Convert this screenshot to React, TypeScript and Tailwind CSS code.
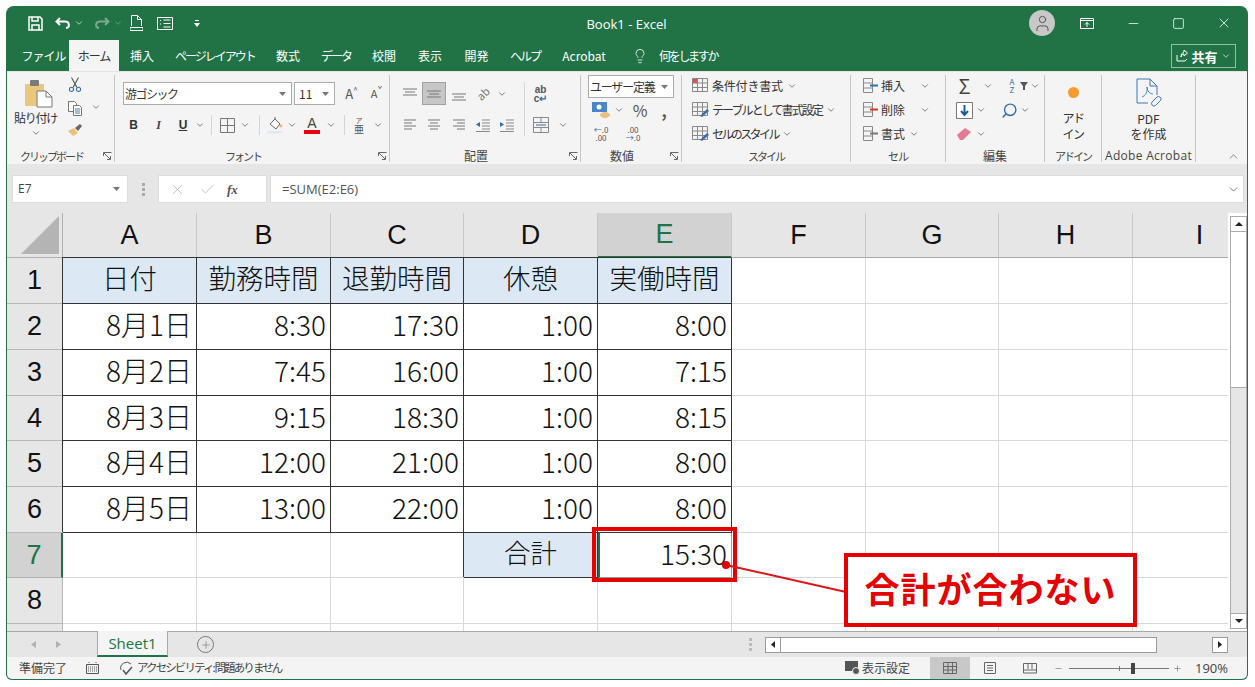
import type { ReactNode } from "react";
import { ChevronDown, ChevronUp, Lightbulb, Minus, Plus, Square, X, User, Search, Check } from "lucide-react";
import clsx from "clsx";

const FONT = "font-['Noto_Sans_CJK_JP','Noto_Sans',sans-serif]";
const CELL_FONT = "font-['Noto_Sans_CJK_JP',sans-serif] font-light";

const Chev = ({ className }: { className?: string }) => (
  <ChevronDown size={10} strokeWidth={1.6} className={clsx("text-[#444] shrink-0", className)} />
);

// fixed width slot so ribbon items line up
const Slot = ({ w, children, className }: { w: string; children?: ReactNode; className?: string }) => (
  <div className={clsx("flex items-center justify-center shrink-0 h-[22px]", w, className)}>{children}</div>
);

const Launcher = () => (
  <svg width="9" height="9" viewBox="0 0 9 9" className="text-[#666] shrink-0">
    <path d="M.5 4V.5H8.5M1 1l6 6M4 7.5h3.5V4" fill="none" stroke="currentColor" />
  </svg>
);

const VSep = () => <div className="w-px h-[20px] bg-[#d4d4d4] shrink-0" />;

const Group = ({ w, label, labelClass, launcher, children }: { w: string; label: string; labelClass?: string; launcher?: boolean; children: ReactNode }) => (
  <div className={clsx("relative flex flex-col shrink-0 h-[87px] mt-[3px] border-r border-[#c6c6c6]", w)}>
    <div className="flex-1 min-h-0">{children}</div>
    <div className={clsx("h-[10px] mb-px flex items-center justify-center leading-none text-[#444] whitespace-nowrap", launcher && "pr-[18px]", labelClass ?? "text-[11px] tracking-[-2px]")}>
      {label}
    </div>
    {launcher && (
      <div className="absolute right-[2px] bottom-px">
        <Launcher />
      </div>
    )}
  </div>
);

const Lines = ({ kind }: { kind: "top" | "mid" | "bot" | "left" | "center" | "right" }) => {
  const paths = {
    top: "M1 3h14M3 6h10M1 9h14",
    mid: "M1 5h14M3 8h10M1 11h14",
    bot: "M1 8h14M3 11h10M1 14h14",
    left: "M2 3h12M2 6h8M2 9h12M2 12h8",
    center: "M2 3h12M4 6h8M2 9h12M4 12h8",
    right: "M2 3h12M6 6h8M2 9h12M6 12h8",
  };
  return (
    <svg width="16" height="16" viewBox="0 0 16 16">
      <path d={paths[kind]} stroke="#777" fill="none" />
    </svg>
  );
};

const Clipboard = () => (
  <svg width="29" height="28" viewBox="0 0 29 28">
    <rect x="1" y="4" width="19" height="22" fill="#eac77f" />
    <rect x="6" y="0" width="9" height="6" rx="1" fill="#7a7a7a" />
    <path d="M13 11h9l6 6v10H13z" fill="#fff" stroke="#777" />
    <path d="M22 11v6h6" fill="none" stroke="#777" />
  </svg>
);

const Scissors = () => (
  <svg width="14" height="17" viewBox="0 0 16 18" fill="none" stroke="#555" strokeWidth="1.2">
    <path d="M4 1l6 11M12 1L6 12" />
    <circle cx="4" cy="14.5" r="2.4" stroke="#3a6ea5" />
    <circle cx="12" cy="14.5" r="2.4" stroke="#3a6ea5" />
  </svg>
);

const Copy = () => (
  <svg width="16" height="16" viewBox="0 0 16 16" fill="#fff" stroke="#777">
    <path d="M1.5 1.5h6l2 2v8h-8z" />
    <path d="M6.5 5.5h6l2 2v8h-8z" />
    <path d="M8 9h5M8 11h5M8 13h5" stroke="#4a7fb5" />
  </svg>
);

const Brush = () => (
  <svg width="16" height="14" viewBox="0 0 16 14">
    <path d="M1 8l6-3 4 5-5 3z" fill="#e9c27a" />
    <path d="M8 5l5-4 2 2-4 5z" fill="#666" />
  </svg>
);

const FontBox = ({ w, text, className, textClass }: { w: string; text: string; className?: string; textClass?: string }) => (
  <div className={clsx("h-[23px] bg-white border border-[#ababab] flex items-center justify-between pl-[1px] pr-[5px] shrink-0 text-[#333]", w, className)}>
    <span className={clsx("text-[12px] leading-none whitespace-nowrap", textClass)}>{text}</span>
    <svg width="7" height="4" viewBox="0 0 7 4" className="shrink-0"><path d="M0 0h7L3.5 4z" fill="#777" /></svg>
  </div>
);

const Ribbon = () => (
  <div className="h-[93px] bg-[#f4f4f4] flex shrink-0 text-[#333] text-[12px] border-t border-[#e4e4e4]">
    {/* clipboard */}
    <Group w="w-[108px]" label="クリップボード" launcher>
      <div className="flex h-full">
        <div className="w-[57px] flex flex-col items-center pt-[5px]">
          <div className="pl-[5px]"><Clipboard /></div>
          <div className="text-[12px] leading-none mt-[4px] tracking-[-1.200px] whitespace-nowrap">貼り付け</div>
          <Chev className="mt-[4px]" />
        </div>
        <div className="w-[22px] flex flex-col items-center pt-[1px] gap-[7px]">
          <Scissors />
          <Copy />
          <Brush />
        </div>
        <div className="pt-[27px] pl-[5px]"><Chev /></div>
      </div>
    </Group>

    {/* font */}
    <Group w="w-[275px]" label="フォント" launcher>
      <div className="pl-[8px] pt-[7px] flex gap-[2px] items-center">
        <FontBox w="w-[169px]" text="游ゴシック" textClass="tracking-[-1.500px]" />
        <FontBox w="w-[41px]" text="11" className="pl-[4px]" />
        <Slot w="w-[23px]" className="ml-[3px] text-[13px] text-[#555]">A<sup className="text-[8px]">^</sup></Slot>
        <Slot w="w-[23px]" className="text-[11px] text-[#555]">A<sup className="text-[8px]">ˇ</sup></Slot>
      </div>
      <div className="pl-[8px] mt-[9px] flex items-center">
        <Slot w="w-[21px]" className="font-bold text-[12px] font-['Liberation_Sans',sans-serif]">B</Slot>
        <Slot w="w-[25px]" className="italic font-bold text-[12px] text-[#444] font-['Liberation_Serif',serif] ml-[2px]">I</Slot>
        <Slot w="w-[24px]" className="underline font-bold text-[12px] font-['Liberation_Sans',sans-serif]">U</Slot>
        <Slot w="w-[10px]"><Chev /></Slot>
        <Slot w="w-[13px]"><VSep /></Slot>
        <Slot w="w-[18px]">
          <svg width="15" height="15" viewBox="0 0 15 15" fill="none" stroke="#777"><path d="M.5.5h14v14H.5zM7.5 0v15M0 7.5h15" /></svg>
        </Slot>
        <Slot w="w-[17px]"><Chev /></Slot>
        <Slot w="w-[13px]"><VSep /></Slot>
        <Slot w="w-[17px]">
          <svg width="16" height="18" viewBox="0 0 16 18">
            <path d="M3 8l5-5 5 5-4 5z" fill="#fff" stroke="#666" />
            <path d="M8 3V1" stroke="#666" />
            <circle cx="14" cy="10" r="1.4" fill="#f4b36b" />
            <rect x="0" y="15" width="15" height="2.5" fill="#dde9f5" />
          </svg>
        </Slot>
        <Slot w="w-[18px]"><Chev /></Slot>
        <Slot w="w-[22px]">
          <div className="flex flex-col items-center leading-none">
            <span className="text-[14px] font-['Liberation_Sans',sans-serif] text-[#444] leading-[13px]">A</span>
            <span className="w-[16px] h-[4px] bg-[#e60012]" />
          </div>
        </Slot>
        <Slot w="w-[15px]"><Chev /></Slot>
        <Slot w="w-[13px]"><VSep /></Slot>
        <Slot w="w-[16px]" className="text-[10px] text-[#555] leading-[9px]">
          <span className="flex flex-col items-center"><span className="text-[7px] leading-[7px]">ア</span><span className="leading-[10px]">亜</span></span>
        </Slot>
        <Slot w="w-[21px]"><Chev /></Slot>
      </div>
    </Group>

    {/* alignment */}
    <Group w="w-[191px]" label="配置" labelClass="text-[12px]" launcher>
      <div className="pl-[7px] pt-[7px] flex items-start">
        <div className="flex flex-col gap-[9px]">
          <div className="flex items-center">
            <Slot w="w-[25px]" className="h-[23px]"><Lines kind="top" /></Slot>
            <Slot w="w-[24px]" className="h-[23px] bg-[#c6c6c6] border border-[#a0a0a0]"><Lines kind="mid" /></Slot>
            <Slot w="w-[25px]" className="h-[23px]"><Lines kind="bot" /></Slot>
            <Slot w="w-[24px]" className="h-[23px] text-[11px] text-[#777] -rotate-45">ab</Slot>
            <Slot w="w-[14px]" className="h-[23px]"><Chev /></Slot>
          </div>
          <div className="flex items-center">
            <Slot w="w-[25px]"><Lines kind="left" /></Slot>
            <Slot w="w-[24px]"><Lines kind="center" /></Slot>
            <Slot w="w-[25px]"><Lines kind="right" /></Slot>
            <Slot w="w-[24px]">
              <svg width="16" height="14" viewBox="0 0 16 14" fill="none"><path d="M7 2h8M7 5h8M7 8h8M7 11h8M1 13.500h14" stroke="#888" /><path d="M5 4L1 6.500 5 9z" fill="#2d6fb0" /></svg>
            </Slot>
            <Slot w="w-[24px]">
              <svg width="16" height="14" viewBox="0 0 16 14" fill="none"><path d="M7 2h8M7 5h8M7 8h8M7 11h8M1 13.500h14" stroke="#888" /><path d="M1 4l4 2.500L1 9z" fill="#2d6fb0" /></svg>
            </Slot>
          </div>
        </div>
        <div className="w-px h-[54px] bg-[#d4d4d4] shrink-0 ml-[5px]" />
        <div className="flex flex-col gap-[9px]">
          <Slot w="w-[31px]" className="h-[23px]">
            <div className="flex flex-col items-center text-[10px] leading-[9px] text-[#555] font-['Liberation_Sans',sans-serif] font-bold">
              <span>ab</span><span>c<span className="text-[#3a6ea5]">↵</span></span>
            </div>
          </Slot>
          <div className="flex items-center">
            <Slot w="w-[31px]">
              <svg width="16" height="16" viewBox="0 0 16 16" fill="none"><path d="M.5.5h15v15H.5zM0 5.500h16M0 10.500h16M8 0v5M8 11v5" stroke="#888" /><path d="M3 8h10" stroke="#2d6fb0" /></svg>
            </Slot>
            <Slot w="w-[14px]"><Chev /></Slot>
          </div>
        </div>
      </div>
    </Group>

    {/* number */}
    <Group w="w-[101px]" label="数値" labelClass="text-[12px]" launcher>
      <div className="pl-[7px]">
        <FontBox w="w-[86px]" text="ユーザー定義" textClass="tracking-[-1.200px]" />
      </div>
      <div className="pl-[9px] flex items-center">
        <Slot w="w-[22px]" className="h-[24px]">
          <svg width="20" height="18" viewBox="0 0 20 18">
            <rect x="1" y="1" width="15" height="10" fill="#4a86c5" />
            <circle cx="8" cy="6" r="2.500" fill="#fff" />
            <ellipse cx="14" cy="14" rx="5" ry="3" fill="#e9c27a" />
          </svg>
        </Slot>
        <Slot w="w-[14px]" className="h-[24px]"><Chev /></Slot>
        <Slot w="w-[28px]" className="h-[24px] text-[16px] text-[#555]">%</Slot>
        <Slot w="w-[20px]" className="h-[24px] text-[16px] font-bold text-[#555]">,</Slot>
      </div>
      <div className="pl-[9px] flex items-center">
        <Slot w="w-[22px]" className="h-[24px] text-[8px] leading-[8px] text-[#555]"><span className="text-center"><span className="text-[#2d6fb0]">←</span>.0<br />.00</span></Slot>
        <Slot w="w-[10px]" className="h-[24px]" />
        <Slot w="w-[22px]" className="h-[24px] text-[8px] leading-[8px] text-[#555]"><span className="text-center">.00<br /><span className="text-[#2d6fb0]">→</span>.0</span></Slot>
      </div>
    </Group>

    {/* styles */}
    <Group w="w-[169px]" label="スタイル">
      <div className="pl-[10px] flex flex-col gap-[2px]">
        {[
          { t: "条件付き書式", c: "tracking-[-0.200px]" },
          { t: "テーブルとして書式設定", c: "tracking-[-1.900px]" },
          { t: "セルのスタイル", c: "tracking-[-2.600px]" },
        ].map((r, i) => (
          <div key={r.t} className="h-[22px] flex items-center">
            <svg width="18" height="16" viewBox="0 0 18 16" className="shrink-0 mr-[2px]">
              <path d="M.5.5h15v13H.5zM0 5h16M0 9.500h16M5.500 0v14M10.500 0v14" fill="none" stroke="#888" />
              {i === 0 ? <rect x="1" y="1" width="4" height="4" fill="#d9534f" /> : <path d="M8 14l7-7 2 2-7 6z" fill="#3a6ea5" />}
            </svg>
            <span className={clsx("leading-none whitespace-nowrap", r.c)}>{r.t}</span>
            <Chev className="ml-[4px]" />
          </div>
        ))}
      </div>
    </Group>

    {/* cells */}
    <Group w="w-[95px]" label="セル" labelClass="text-[11px] tracking-[-1px]">
      <div className="pl-[12px] flex flex-col gap-[2px]">
        {[
          { t: "挿入", c: "#2d6fb0", gap: "ml-[15px]" },
          { t: "削除", c: "#d9342b", gap: "ml-[15px]" },
          { t: "書式", c: "#777", gap: "ml-[4px]" },
        ].map((r) => (
          <div key={r.t} className="h-[22px] flex items-center">
            <svg width="16" height="16" viewBox="0 0 16 16" className="shrink-0 mr-[2px]">
              <path d="M.5.5h9v14h-9zM0 5h10M0 10h10" fill="none" stroke="#888" />
              <path d="M7 7.500h8" stroke={r.c} strokeWidth="2" />
            </svg>
            <span className="leading-none">{r.t}</span>
            <Chev className={r.gap} />
          </div>
        ))}
      </div>
    </Group>

    {/* editing */}
    <Group w="w-[99px]" label="編集" labelClass="text-[12px]">
      <div className="pl-[10px] flex flex-col gap-[2px]">
        <div className="h-[22px] flex items-center">
          <Slot w="w-[17px]" className="text-[20px] leading-none text-[#444]">Σ</Slot>
          <Slot w="w-[16px]" className="ml-[7px]"><Chev /></Slot>
          <Slot w="w-[16px]" className="ml-[8px] text-[8px] leading-[8px] text-[#3a6ea5]"><span className="text-center">A<br />Z</span></Slot>
          <svg width="8" height="8" viewBox="0 0 8 8"><path d="M0 0h8L5 4v4H3V4z" fill="#555" /></svg>
          <Chev className="ml-[2px]" />
        </div>
        <div className="h-[22px] flex items-center">
          <svg width="17" height="17" viewBox="0 0 17 17" className="shrink-0">
            <path d="M.5.500h16v16H.5z" fill="#fff" stroke="#777" />
            <path d="M8.500 3v9M5 9l3.500 4L12 9" fill="none" stroke="#1e5c9c" strokeWidth="2" />
          </svg>
          <Chev className="ml-[3px]" />
          <Search size={17} strokeWidth={2} className="text-[#2d6fb0] ml-[15px] -scale-x-100" />
          <Chev className="ml-[2px]" />
        </div>
        <div className="h-[22px] flex items-center">
          <svg width="17" height="14" viewBox="0 0 17 14" className="shrink-0">
            <path d="M1 8l8-7 6 4-8 8H4z" fill="#e07a95" />
          </svg>
          <Chev className="ml-[3px]" />
        </div>
      </div>
    </Group>

    {/* add-ins */}
    <Group w="w-[57px]" label="アドイン">
      <div className="flex flex-col items-center h-full">
        <div className="w-[11px] h-[11px] rounded-full bg-[#f79b2e] mt-[12px]" />
        <div className="text-center text-[12px] leading-[16px] mt-[12px] tracking-[-1.500px]">アド<br />イン</div>
      </div>
    </Group>

    {/* acrobat */}
    <Group w="w-[94px]" label="Adobe Acrobat" labelClass="text-[12px] tracking-[0.300px] font-['Open_Sans',sans-serif]">
      <div className="flex flex-col items-center h-full">
        <svg width="28" height="32" viewBox="0 0 28 32" fill="none" stroke="#3a76b8" strokeWidth="1" className="mt-[2px]">
          <path d="M2 2h13l7 7v9M2 2v24h11" />
          <path d="M15 2v7h7" />
          <path d="M7 20c3-1 6-5 5-10 0 4 3 7 6 7" strokeWidth="0.9" />
          <path d="M17 25l5-5a2.500 2.500 0 0 1 3.500 3.500l-5 5a2.500 2.500 0 0 1-3.500-3.500z" />
        </svg>
        <div className="text-center text-[12px] leading-[15px] mt-[2px]">PDF<br />を作成</div>
      </div>
    </Group>

    <div className="flex-1 flex items-end justify-end pr-[7px] pb-[1px]">
      <ChevronUp size={13} strokeWidth={1.3} className="text-[#555]" />
    </div>
  </div>
);

const TitleBar = () => (
  <div className="h-[34px] relative flex items-center shrink-0 text-white">
    <div className="flex items-center pl-[20px]">
      <Slot w="w-[16px]">
        <svg width="15" height="15" viewBox="0 0 15 15" fill="none" stroke="#fff" strokeWidth="1.500"><path d="M1 1h11l2 2v11H1zM4 1v4h6V1M4 14V9h7v5" /></svg>
      </Slot>
      <Slot w="w-[20px]" className="ml-[10px]">
        <svg width="16" height="12" viewBox="0 0 16 12" fill="none" stroke="#fff" strokeWidth="2"><path d="M5 1L1.500 4.500 5 8M2 4.500h8c5 0 5 6 1 6.500" /></svg>
      </Slot>
      <Chev className="text-white ml-[1px]" />
      <Slot w="w-[20px]" className="ml-[8px] opacity-40">
        <svg width="16" height="12" viewBox="0 0 16 12" fill="none" stroke="#fff" strokeWidth="2"><path d="M11 1l3.500 3.500L11 8M14 4.500H6c-5 0-5 6-1 6.500" /></svg>
      </Slot>
      <Chev className="text-white opacity-40 ml-[1px]" />
      <Slot w="w-[14px]" className="ml-[6px]">
        <svg width="13" height="16" viewBox="0 0 13 16" fill="none" stroke="#fff"><path d="M1.500 11V.5h6l4 4V11M7.500.5v4h4M0 12.500h13v3H0z" /></svg>
      </Slot>
      <Slot w="w-[16px]" className="ml-[14px]">
        <svg width="16" height="13" viewBox="0 0 16 13" fill="none" stroke="#fff"><path d="M.5.500h15v12H.5zM6.500 3h7M6.500 6.500h7M6.500 10h7M3 3.500h1M3 7h1" /></svg>
      </Slot>
      <Slot w="w-[8px]" className="ml-[20px]">
        <svg width="6" height="7" viewBox="0 0 6 7" fill="#fff"><path d="M0 3h6L3 7zM1 0h4v1H1z" /></svg>
      </Slot>
    </div>
    <div className="absolute left-0 right-0 top-[12px] text-center text-[13px] leading-none font-['Open_Sans',sans-serif] pr-[1px]">Book1 - Excel</div>
    <div className="ml-auto flex items-center pr-[15px]">
      <div className="w-[26px] h-[26px] rounded-full bg-[#c8c8c8] flex items-center justify-center mr-[24px]">
        <User size={19} strokeWidth={1.1} className="text-[#444]" />
      </div>
      <Slot w="w-[16px]" className="mr-[30px]">
        <svg width="14" height="11" viewBox="0 0 14 11" fill="none" stroke="#fff"><path d="M.5.500h13v10H.5zM0 2.500h14M7 9V4.500M5 6.500l2-2 2 2" /></svg>
      </Slot>
      <Slot w="w-[16px]" className="mr-[29px]"><Minus size={15} strokeWidth={1.2} /></Slot>
      <Slot w="w-[16px]" className="mr-[30px]"><Square size={13} strokeWidth={1.4} /></Slot>
      <Slot w="w-[16px]"><X size={18} strokeWidth={1.2} /></Slot>
    </div>
  </div>
);

const tabs: [string, string][] = [
  ["ファイル", "ml-[14px] w-[45px] tracking-[-1px]"],
  ["ホーム", "ml-[3px] w-[50px] bg-[#f4f4f4] text-[#333] -mt-px h-[31px] tracking-[-1px]"],
  ["挿入", "w-[46px]"],
  ["ページレイアウト", "w-[100px] tracking-[-2px]"],
  ["数式", "w-[46px]"],
  ["データ", "w-[50px] tracking-[-2px]"],
  ["校閲", "w-[46px]"],
  ["表示", "w-[46px]"],
  ["開発", "w-[47px]"],
  ["ヘルプ", "w-[50px] tracking-[-2px]"],
  ["Acrobat", "w-[68px]"],
];

const TabBar = () => (
  <div className="h-[31px] flex items-end shrink-0 text-white text-[12px]">
    {tabs.map(([t, c]) => (
      <div key={t} className={clsx("h-[30px] flex items-center justify-center leading-none whitespace-nowrap", c)}>
        {t}
      </div>
    ))}
    <div className="h-[30px] flex items-center ml-[14px]">
      <Lightbulb size={16} strokeWidth={1.2} className="mr-[11px]" />
      <span className="leading-none tracking-[-2.300px]">何をしますか</span>
    </div>
    <div className="ml-auto mr-[11px] mb-[3px] h-[24px] w-[65px] border border-[#8fbfa3] flex items-center justify-center gap-[3px]">
      <svg width="12" height="12" viewBox="0 0 12 12" fill="none" stroke="#fff"><path d="M1 5v6h8l2-2M5 7c0-3 2-5 3-5V0l3.500 3L8 6V4C7 4 5 5 5 7z" /></svg>
      <span className="font-bold text-[13px] leading-none">共有</span>
      <Chev className="text-white" />
    </div>
  </div>
);

const FormulaBar = () => (
  <div className="h-[49px] bg-[#e6e6e6] flex items-start pl-[5px] pt-[11px] shrink-0 text-[#444]">
    <div className="w-[116px] h-[28px] bg-white border border-[#dcdcdc] flex items-center justify-between pl-[5px] pr-[7px]">
      <span className="text-[12px] leading-none font-['Open_Sans',sans-serif]">E7</span>
      <svg width="7" height="4" viewBox="0 0 7 4"><path d="M0 0h7L3.500 4z" fill="#777" /></svg>
    </div>
    <div className="w-[30px] h-[28px] flex items-center justify-center">
      <svg width="3" height="13" viewBox="0 0 3 13" fill="#aaa"><rect y="0" width="3" height="3" /><rect y="5" width="3" height="3" /><rect y="10" width="3" height="3" /></svg>
    </div>
    <div className="w-[109px] h-[28px] bg-white border border-[#dcdcdc] flex items-center">
      <X size={17} strokeWidth={1} className="ml-[10px] text-[#aaa]" />
      <Check size={17} strokeWidth={1} className="ml-[13px] text-[#aaa]" />
      <span className="ml-[11px] italic font-bold text-[13px] font-['Liberation_Serif',serif] text-[#555] leading-none">fx</span>
    </div>
    <div className="ml-[3px] w-[974px] h-[28px] bg-white border border-[#dcdcdc] flex items-center justify-between pl-[11px] pr-[3px]">
      <span className="text-[13px] leading-none font-['Open_Sans',sans-serif] text-[#555]">=SUM(E2:E6)</span>
      <ChevronDown size={13} strokeWidth={1.4} className="text-[#555]" />
    </div>
  </div>
);

const COLS = ["A", "B", "C", "D", "E", "F", "G", "H", "I"];

const rows: string[][] = [
  ["日付", "勤務時間", "退勤時間", "休憩", "実働時間"],
  ["8月1日", "8:30", "17:30", "1:00", "8:00"],
  ["8月2日", "7:45", "16:00", "1:00", "7:15"],
  ["8月3日", "9:15", "18:30", "1:00", "8:15"],
  ["8月4日", "12:00", "21:00", "1:00", "8:00"],
  ["8月5日", "13:00", "22:00", "1:00", "8:00"],
  ["", "", "", "合計", "15:30"],
  ["", "", "", "", ""],
  ["", "", "", "", ""],
];

const Sheet = () => (
  <div className="flex-1 min-h-0 flex text-[#111]">
    <div className={clsx("w-[1221px] shrink-0 overflow-hidden grid grid-cols-[56px_134px_134px_133px_134px_134px_134px_133px_134px_134px] grid-rows-[45px_46px_46px_46px_45px_46px_46px_45px_46px_46px] text-[28px]", CELL_FONT)}>
      {/* corner */}
      <div className="bg-[#e6e6e6] border-r border-b border-[#b0b0b0] flex items-end justify-end p-[3px]">
        <div className="w-0 h-0 border-l-[38px] border-l-transparent border-b-[38px] border-b-[#b4b4b4]" />
      </div>
      {COLS.map((c) => (
        <div
          key={c}
          className={clsx(
            "flex items-center justify-center leading-none border-r border-[#c8c8c8] font-['Liberation_Sans',sans-serif] font-normal text-[27px]",
            c === "E" ? "bg-[#d2d2d2] text-[#217346] border-b-2 border-b-[#217346]" : "bg-[#e6e6e6] border-b border-b-[#a8a8a8]"
          )}
        >
          {c}
        </div>
      ))}
      {rows.map((r, i) => (
        <Row key={i} idx={i} cells={r} />
      ))}
    </div>
    {/* vertical scrollbar */}
    <div className="w-[17px] ml-[2px] mt-[3px] flex flex-col bg-white border-x border-[#ababab] mb-[2px]">
      <div className="h-[16px] border border-[#ababab] -mx-px flex items-center justify-center bg-white">
        <svg width="8" height="4" viewBox="0 0 8 4"><path d="M0 4h8L4 0z" fill="#222" /></svg>
      </div>
      <div className="h-[156px] border-b border-[#ababab] bg-white" />
      <div className="flex-1 bg-[#e6e6e6]" />
      <div className="h-[16px] border border-[#ababab] -mx-px flex items-center justify-center bg-white">
        <svg width="8" height="4" viewBox="0 0 8 4"><path d="M0 0h8L4 4z" fill="#222" /></svg>
      </div>
    </div>
  </div>
);

const DARK = "border-r border-b border-[#333] shadow-[-1px_-1px_0_0_#333]";

const Row = ({ idx, cells }: { idx: number; cells: string[] }) => {
  const n = idx + 1;
  return (
    <>
      <div
        className={clsx(
          "flex items-center justify-center leading-none font-['Liberation_Sans',sans-serif] font-normal text-[27px]",
          n === 7
            ? "bg-[#d2d2d2] text-[#217346] border-r-2 border-r-[#217346] border-b border-b-[#b0b0b0]"
            : "bg-[#e6e6e6] border-r border-b border-[#b8b8b8]"
        )}
      >
        {n}
      </div>
      {Array.from({ length: 9 }).map((_, c) => {
        const text = cells[c] ?? "";
        const inTable = (n <= 6 && c < 5) || (n === 7 && (c === 3 || c === 4));
        const isHead = n === 1 && c < 5;
        const isLabel = n === 7 && c === 3;
        const center = isHead || isLabel;
        return (
          <div
            key={c}
            className={clsx(
              "flex items-center leading-none whitespace-nowrap overflow-hidden pb-[5px]",
              center ? "justify-center" : "justify-end pr-[4px]",
              inTable ? DARK : "border-r border-b border-[#d8d8d8]",
              (isHead || isLabel) && "bg-[#dce9f5]",
              isHead && "text-[27.500px]",
              isLabel && "text-[26.500px]",
              n === 7 && c === 4 && "border-[#8aa596]! border-l-2! border-l-[#217346]! shadow-none!"
            )}
          >
            {text}
          </div>
        );
      })}
    </>
  );
};

const BottomTabs = () => (
  <div className="h-[26px] shrink-0 bg-[#e6e6e6] border-t border-[#a8a8a8] flex items-center text-[#666]">
    <div className="w-[90px] flex items-center pl-[24px] gap-[20px] text-[#b0b0b0]">
      <svg width="5" height="7" viewBox="0 0 5 7" fill="currentColor"><path d="M5 0v7L0 3.500z" /></svg>
      <svg width="5" height="7" viewBox="0 0 5 7" fill="currentColor"><path d="M0 0v7l5-3.500z" /></svg>
    </div>
    <div className="h-[26px] -mt-px w-[71px] bg-[#f4f4f4] border-x border-[#a8a8a8] border-b-2 border-b-[#217346] flex items-center justify-center text-[15px] leading-none text-[#217346] font-['Open_Sans',sans-serif]">
      Sheet1
    </div>
    <div className="ml-[29px] w-[17px] h-[17px] rounded-full border border-[#777] flex items-center justify-center">
      <Plus size={12} strokeWidth={1} className="text-[#555]" />
    </div>
    <svg width="3" height="13" viewBox="0 0 3 13" fill="#bbb" className="ml-[535px]"><rect y="0" width="3" height="3" /><rect y="5" width="3" height="3" /><rect y="10" width="3" height="3" /></svg>
    <div className="ml-[13px] w-[463px] h-[16px] flex bg-[#e6e6e6]">
      <div className="w-[16px] bg-white border border-[#999] flex items-center justify-center">
        <svg width="4" height="7" viewBox="0 0 4 7"><path d="M4 0v7L0 3.500z" fill="#222" /></svg>
      </div>
      <div className="w-[376px] bg-white border-y border-r border-[#999]" />
      <div className="flex-1" />
      <div className="w-[16px] bg-white border border-[#999] flex items-center justify-center">
        <svg width="4" height="7" viewBox="0 0 4 7"><path d="M0 0v7l4-3.500z" fill="#222" /></svg>
      </div>
    </div>
  </div>
);

const StatusBar = () => (
  <div className="h-[22px] shrink-0 bg-[#f4f4f4] flex items-center text-[12px] text-[#444] pl-[12px] pr-[19px]">
    <span className="leading-none">準備完了</span>
    <svg width="13" height="12" viewBox="0 0 13 12" className="ml-[19px]" fill="none" stroke="#555"><path d="M.5 2.500h12v9H.5z" /><path d="M3 0v3M10 0v3M2 5h9M2 7h9M2 9h9" strokeDasharray="1 1" /></svg>
    <svg width="16" height="15" viewBox="0 0 16 15" className="ml-[20px]" fill="none" stroke="#555"><path d="M2 9a6 6 0 0 1 10-6" /><path d="M4 9l3 4 6-7" strokeWidth="1.500" /></svg>
    <span className="ml-[2px] leading-none text-[11.500px] tracking-[-1.900px] whitespace-nowrap">アクセシビリティ: 問題ありません</span>
    <div className="ml-auto flex items-center">
      <svg width="16" height="14" viewBox="0 0 16 14"><rect width="13" height="10" fill="#555" /><circle cx="11" cy="10" r="3.500" fill="#555" stroke="#f4f4f4" /></svg>
      <span className="ml-[1px] leading-none">表示設定</span>
      <div className="ml-[20px] w-[40px] h-[22px] bg-[#c8c8c8] flex items-center justify-center">
        <svg width="14" height="12" viewBox="0 0 14 12" fill="none" stroke="#666"><path d="M.5.500h13v11H.5zM0 4.500h14M0 8h14M5 0v12M9.500 0v12" /></svg>
      </div>
      <Slot w="w-[40px]">
        <svg width="12" height="12" viewBox="0 0 12 12" fill="none" stroke="#666"><path d="M.5.500h11v11H.5zM3 3.500h6M3 6h6M3 8.500h6" /></svg>
      </Slot>
      <Slot w="w-[40px]">
        <svg width="14" height="11" viewBox="0 0 14 11" fill="none" stroke="#666"><path d="M.5 10V.5h13V10zM5 0v6M9 0v6M0 7h14" /></svg>
      </Slot>
      <Minus size={9} strokeWidth={1.4} className="ml-[4px] text-[#555]" />
      <div className="ml-[6px] w-[100px] h-[12px] flex items-center relative">
        <div className="w-full h-px bg-[#777]" />
        <div className="absolute left-[50px] w-px h-[5px] bg-[#777]" />
        <div className="absolute left-[62px] w-[4px] h-[11px] bg-[#444]" />
      </div>
      <Plus size={9} strokeWidth={1.4} className="ml-[4px] text-[#555]" />
      <span className="ml-[13px] leading-none font-['Open_Sans',sans-serif] text-[13px]">190%</span>
    </div>
  </div>
);

export default function App() {
  return (
    <div className={clsx("relative w-[1255px] h-[687px] bg-white pl-[6px] pt-[6px] overflow-hidden", FONT)}>
      <div className="w-[1242px] h-[674px] bg-[#217346] rounded-t-[8px] rounded-b-[6px] overflow-hidden flex flex-col border-x border-b border-[#217346]">
        <TitleBar />
        <TabBar />
        <Ribbon />
        <FormulaBar />
        <div className="flex-1 min-h-0 bg-white flex flex-col">
          <Sheet />
        </div>
        <BottomTabs />
        <StatusBar />
      </div>

      {/* annotation overlay */}
      <div className="absolute left-[592px] top-[527px] w-[145px] h-[55px] border-4 border-[#e60000]" />
      <svg className="absolute left-0 top-0 pointer-events-none" width="1255" height="687">
        <line x1="726" y1="565" x2="846" y2="592" stroke="#d81818" strokeWidth="2" />
        <circle cx="726" cy="565" r="4" fill="#e00000" />
      </svg>
      <div className="absolute left-[844px] top-[553px] w-[293px] h-[74px] bg-white border-4 border-[#e60000] flex items-center justify-center pb-[6px] text-[#e60000] font-bold text-[35px] leading-none tracking-[1px]">
        合計が合わない
      </div>
    </div>
  );
}
